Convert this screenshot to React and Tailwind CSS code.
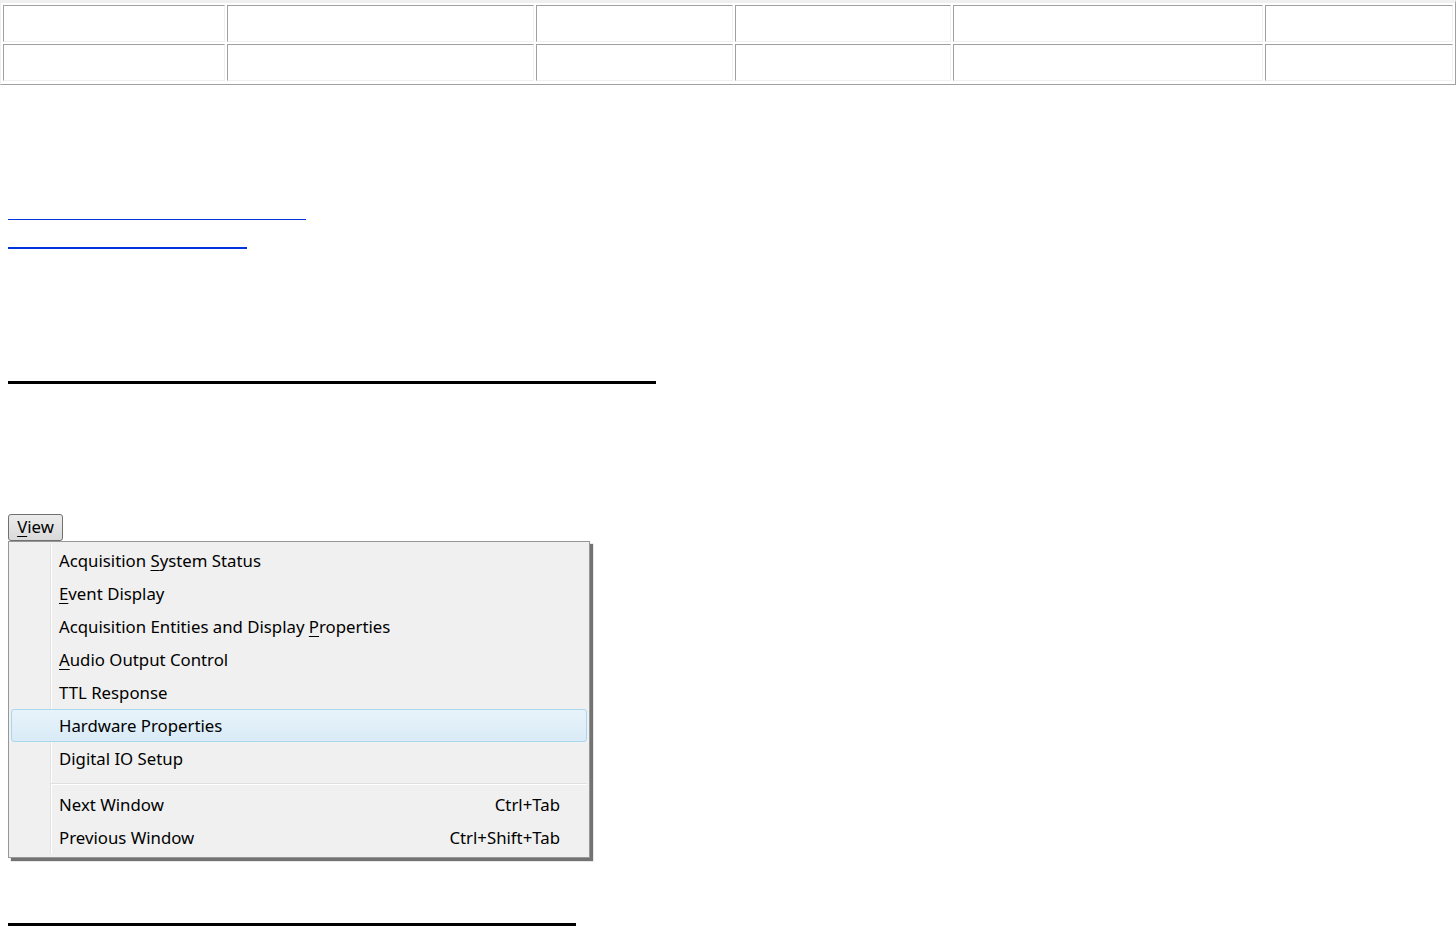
import React from 'react';

const colWidths = ['w-[222px]', 'w-[307px]', 'w-[197px]', 'w-[216px]', 'w-[310px]', 'w-[188px]'];

const menuItems = [
    { label: ['Acquisition ', 'S', 'ystem Status'] },
    { label: ['', 'E', 'vent Display'] },
    { label: ['Acquisition Entities and Display ', 'P', 'roperties'] },
    { label: ['', 'A', 'udio Output Control'] },
    { label: ['TTL Response'] },
    { label: ['Hardware Properties'], active: true },
    { label: ['Digital IO Setup'] },
    { separator: true },
    { label: ['Next Window'], shortcut: 'Ctrl+Tab' },
    { label: ['Previous Window'], shortcut: 'Ctrl+Shift+Tab' },
];

const Label = ({ parts }) => (
    <span>
        {parts[0]}
        {parts[1] && <span className="underline underline-offset-[3px]">{parts[1]}</span>}
        {parts[2]}
    </span>
);

const App = () => {
    return (
        <div className="bg-white min-h-[926px] w-[1456px] overflow-hidden" style={{ fontFamily: '"Noto Sans", "Open Sans", sans-serif' }}>
            {/* empty bordered table */}
            <div className="border-t-[3px] border-l border-t-[#f0f0f0] border-l-[#f0f0f0] border-r border-b border-r-[#a0a0a0] border-b-[#a0a0a0] pl-[2px] pt-[2px] pb-[3px] pr-[2px] flex flex-col gap-[2px]">
                {[0, 1].map(r => (
                    <div key={r} className="flex gap-[2px]">
                        {colWidths.map((w, i) => (
                            <div key={i} className={`${w} h-[37px] border border-t-[#a0a0a0] border-l-[#a0a0a0] border-b-[#f0f0f0] border-r-[#f0f0f0] bg-white`} />
                        ))}
                    </div>
                ))}
            </div>

            {/* empty links */}
            <div className="ml-[8px] mt-[134px] w-[298px] border-t border-[#0033dd]" />
            <div className="ml-[8px] mt-[27px] w-[239px] border-t-2 border-[#0033dd]" />

            <div className="ml-[8px] mt-[132px] w-[648px] h-[3px] bg-black" />

            {/* View menu */}
            <div className="ml-[8px] mt-[130px] w-[55px] h-[27px] rounded-[3px] border border-[#707070] bg-[linear-gradient(#ececec,#d9d9d9)] flex items-center justify-center text-[16.8px] text-black leading-none">
                <span><span className="underline underline-offset-[3px]">V</span>iew</span>
            </div>
            <div className="ml-[8px] w-[582px] border border-[#979797] bg-[#f0f0f0] p-[2px] pb-[3px] shadow-[3px_3px_1px_rgba(0,0,0,0.55)]">
                <div className="bg-[linear-gradient(to_right,#f0f0f0_39px,#e2e3e3_39px,#e2e3e3_40px,#ffffff_40px,#ffffff_41px,#f0f0f0_41px)]">
                    {menuItems.map((it, i) => it.separator ? (
                        <div key={i} className="h-[13px] pt-[8px] pl-[40px]">
                            <div className="h-px bg-[#e0e0e0]" />
                            <div className="h-px bg-white" />
                        </div>
                    ) : (
                        <div
                            key={i}
                            className={`h-[33px] flex items-center justify-between pl-[47px] pr-[26px] text-[16.8px] text-black rounded-[3px] border ${it.active ? 'border-[#a8d8eb] bg-[linear-gradient(#e8f3fa,#d9ebf7)]' : 'border-transparent'}`}
                        >
                            <Label parts={it.label} />
                            {it.shortcut && <span>{it.shortcut}</span>}
                        </div>
                    ))}
                </div>
            </div>

            <div className="ml-[8px] mt-[65px] w-[568px] h-[3px] bg-black" />
        </div>
    );
};

export default App;
